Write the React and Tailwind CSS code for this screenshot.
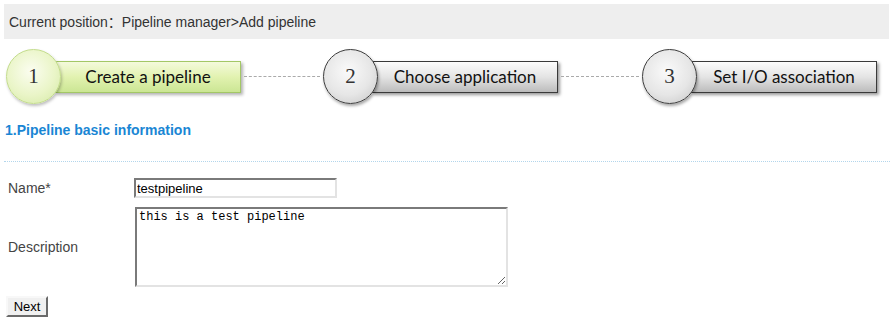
import React from 'react';

const steps = [
  { num: '1', label: 'Create a pipeline', active: true },
  { num: '2', label: 'Choose application', active: false },
  { num: '3', label: 'Set I/O association', active: false },
];

const Step = ({ num, label, active }) => (
  <div className="flex items-center w-[235px] shrink-0">
    <div
      className={
        active
          ? 'relative z-10 w-[55px] h-[55px] shrink-0 rounded-full border border-[#c3dc8c] bg-[radial-gradient(circle_at_45%_40%,#fbfdf0_0%,#eaf5c8_55%,#d3e9a2_100%)] shadow-[1px_2px_3px_rgba(0,0,0,0.25)] flex items-center justify-center'
          : 'relative z-10 w-[55px] h-[55px] shrink-0 rounded-full border border-[#3c3c3c] bg-[radial-gradient(circle_at_45%_40%,#fafafa_0%,#e6e6e6_55%,#c4c4c4_100%)] shadow-[1px_2px_3px_rgba(0,0,0,0.35)] flex items-center justify-center'
      }
    >
      <span className="font-['Liberation_Serif',serif] text-[21px] text-[#333] leading-none">{num}</span>
    </div>
    <div
      className={
        active
          ? 'ml-[-6px] w-[186px] h-[32px] border border-[#a3c766] bg-[linear-gradient(to_bottom,#f4fadc_0%,#e2f2b0_50%,#cbe694_100%)] shadow-[2px_2px_3px_rgba(0,0,0,0.3)] flex items-center justify-center'
          : 'ml-[-6px] w-[186px] h-[32px] border border-[#3a3a3a] bg-[linear-gradient(to_bottom,#fcfcfc_0%,#e4e4e4_50%,#bcbcbc_100%)] shadow-[2px_2px_3px_rgba(0,0,0,0.4)] flex items-center justify-center'
      }
    >
      <span className="font-['Lato',sans-serif] text-[17px] text-[#111] leading-none">{label}</span>
    </div>
  </div>
);

const App = () => {
  return (
    <div className="w-[890px] h-[330px] bg-white font-['Liberation_Sans',Arial,sans-serif] pt-[4px] overflow-hidden">
      <div className="ml-[4px] mr-[1px] h-[35px] bg-[#eeeeee] flex items-center pl-[5px] text-[14px] text-[#333]">
        <span>
          Current position<span className="font-['Noto_Sans_CJK_SC',sans-serif]">：</span>Pipeline manager&gt;Add pipeline
        </span>
      </div>

      <div className="mt-[10px] pl-[6px] flex items-center h-[55px]">
        <Step {...steps[0]} />
        <div className="w-[82px] shrink-0 px-[3px] flex items-center">
          <div className="w-full border-t border-dashed border-[#aaaaaa]" />
        </div>
        <Step {...steps[1]} />
        <div className="w-[84px] shrink-0 px-[3px] flex items-center">
          <div className="w-full border-t border-dashed border-[#aaaaaa]" />
        </div>
        <Step {...steps[2]} />
      </div>

      <div className="mt-[18px] pl-[5px] h-[16px] leading-[16px] text-[14px] font-bold text-[#1a86d4]">
        1.Pipeline basic information
      </div>

      <div className="mt-[23px] ml-[4px] border-t border-dotted border-[#b3d6ec]" />

      <div className="mt-[16px] flex items-center h-[20px]">
        <label className="w-[134px] pl-[8px] text-[14px] leading-[16px] text-[#444] shrink-0">Name*</label>
        <input
          type="text"
          defaultValue="testpipeline"
          className="w-[203px] h-[20px] px-[1px] text-[13px] leading-[16px] text-black border-2 border-t-[#7a7a7a] border-l-[#7a7a7a] border-r-[#e3e3e3] border-b-[#e3e3e3] outline-none"
        />
      </div>

      <div className="mt-[9px] flex items-center h-[80px]">
        <label className="w-[135px] pl-[8px] text-[14px] leading-[16px] text-[#444] shrink-0">Description</label>
        <textarea
          defaultValue="this is a test pipeline"
          className="block w-[373px] h-[80px] px-[2px] py-[1px] font-['Liberation_Mono',monospace] text-[12px] leading-[14px] text-black border-2 border-t-[#7a7a7a] border-l-[#7a7a7a] border-r-[#e3e3e3] border-b-[#e3e3e3] outline-none resize"
        />
      </div>

      <div className="mt-[9px] pl-[6px] flex">
        <button
          type="button"
          className="w-[42px] h-[21px] text-[13px] leading-[15px] text-black bg-[#f0f0f0] border-2 border-t-[#f8f8f8] border-l-[#f8f8f8] border-r-[#6a6a6a] border-b-[#6a6a6a]"
        >
          Next
        </button>
      </div>
    </div>
  );
};

export default App;
